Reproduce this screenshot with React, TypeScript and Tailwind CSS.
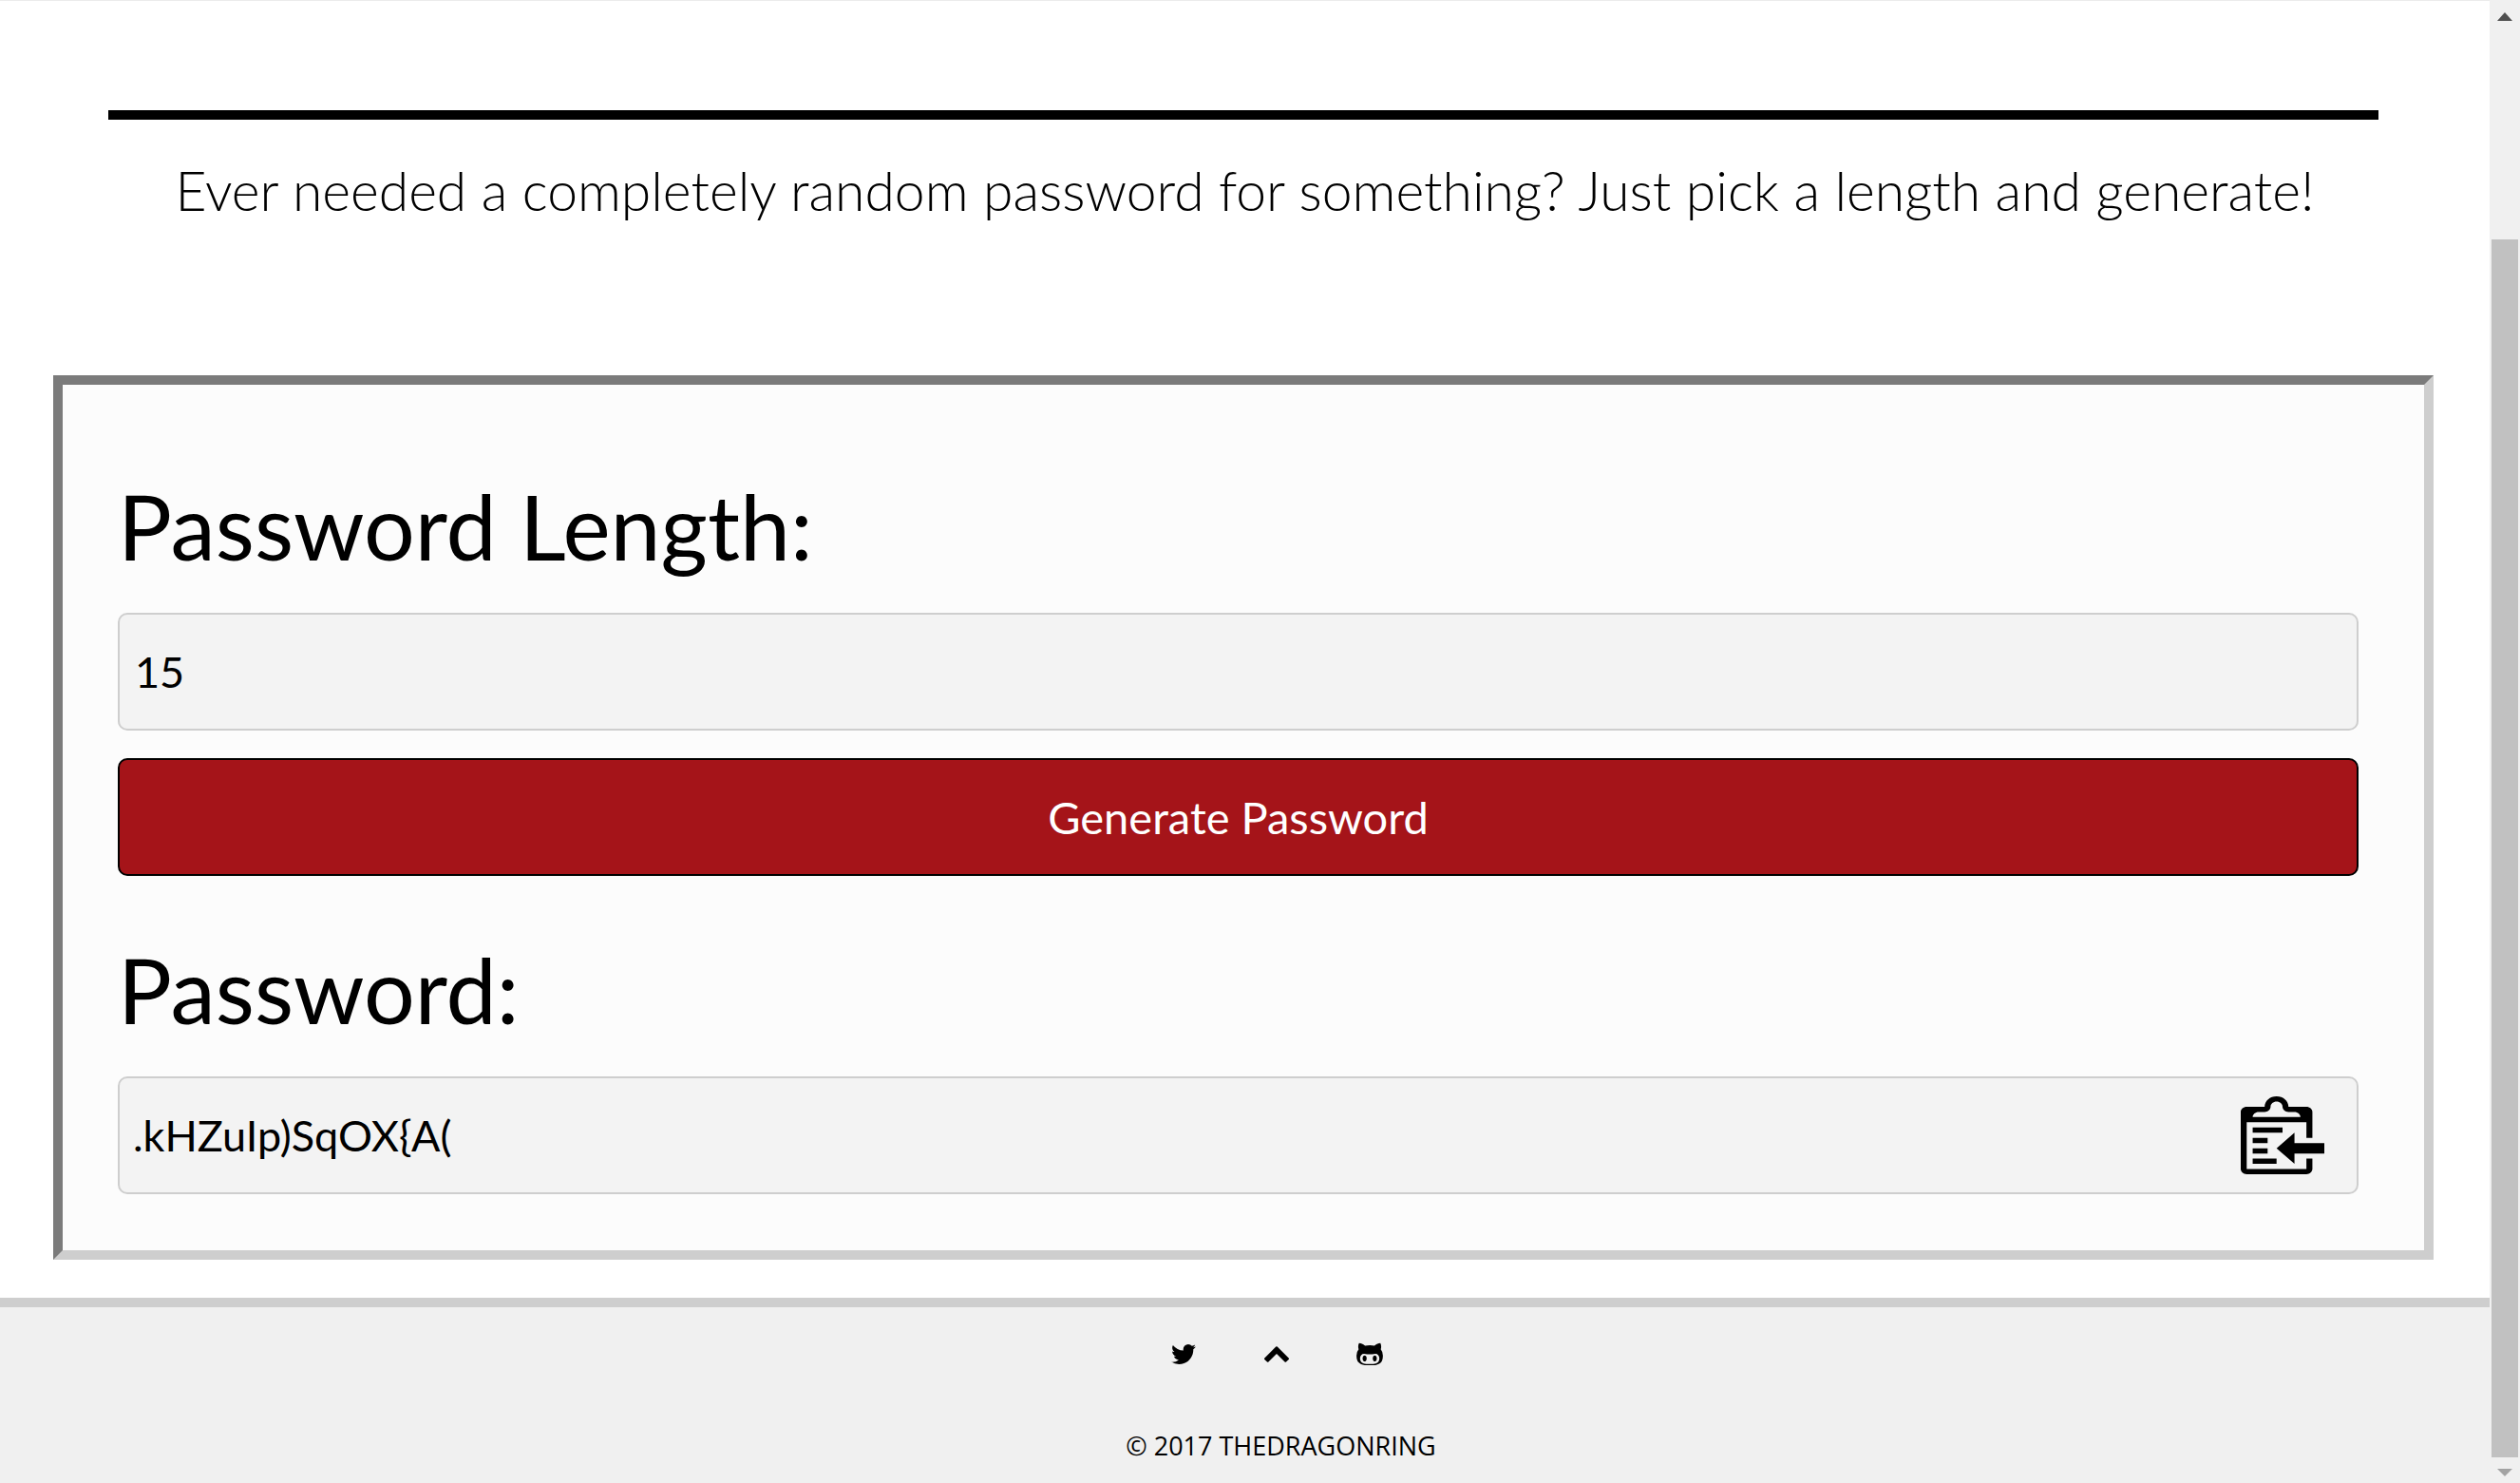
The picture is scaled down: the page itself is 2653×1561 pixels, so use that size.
import { useState } from 'react';

function ClipboardIcon() {
  return (
    <svg viewBox="0 1 14 15" preserveAspectRatio="none" className="block h-[82px] w-[88px]" fill="currentColor" aria-hidden="true">
      <path
        fillRule="evenodd"
        d="M2 13h4v1H2v-1zm5-6H2v1h5V7zm2 3V8l-3 3 3 3v-2h5v-2H9zM4.500 9H2v1h2.500V9zM2 12h2.500v-1H2v1zm9 1h1v2c-.02.28-.11.52-.3.7-.19.18-.42.28-.7.3H1c-.55 0-1-.45-1-1V4c0-.55.45-1 1-1h3c0-1.110.89-2 2-2 1.110 0 2 .89 2 2h3c.55 0 1 .45 1 1v5h-1V6H1v9h10v-2zM2 5h8c0-.55-.45-1-1-1H8c-.55 0-1-.45-1-1s-.45-1-1-1-1 .45-1 1-.45 1-1 1H3c-.55 0-1 .45-1 1z"
      />
    </svg>
  );
}

function TwitterIcon() {
  return (
    <svg viewBox="108 256 1576 1280" className="h-[21px] w-[26px]" fill="currentColor" aria-hidden="true">
      <path d="M1684 408q-67 98-162 167 1 14 1 42 0 130-38 259.5t-115.5 248.5-184.5 210.5-258 146-323 54.5q-271 0-496-145 35 4 78 4 225 0 401-138-105-2-188-64.5t-114-159.5q33 5 61 5 43 0 85-11-112-23-185.5-111.5t-73.5-205.5v-4q68 38 146 41-66-44-105-115t-39-154q0-88 44-163 121 149 294.5 238.5t371.5 99.5q-8-38-8-74 0-134 94.5-228.5t228.5-94.5q140 0 236 102 109-21 205-78-37 115-142 178 93-10 186-50z" />
    </svg>
  );
}

function ChevronUpIcon() {
  return (
    <svg viewBox="90 480 1612 1035" className="h-[17px] w-[26px]" fill="currentColor" aria-hidden="true">
      <path d="M1683 1331l-166 165q-19 19-45 19t-45-19l-531-531-531 531q-19 19-45 19t-45-19l-166-165q-19-19-19-45.5t19-45.5l742-741q19-19 45-19t45 19l742 741q19 19 19 45.5t-19 45.5z" />
    </svg>
  );
}

function GithubIcon() {
  return (
    <svg viewBox="0 128 1664 1436" className="h-[24px] w-[28px]" fill="currentColor" aria-hidden="true">
      <path d="M640 1136q0 40-12.5 82t-43 76-72.5 34-72.5-34-43-76-12.5-82 12.5-82 43-76 72.5-34 72.5 34 43 76 12.5 82zm640 0q0 40-12.5 82t-43 76-72.5 34-72.5-34-43-76-12.5-82 12.5-82 43-76 72.5-34 72.5 34 43 76 12.5 82zm160 0q0-120-69-204t-187-84q-41 0-195 21-71 11-157 11t-157-11q-152-21-195-21-118 0-187 84t-69 204q0 88 32 153.5t81 103 122 60 140 29.5 149 7h168q82 0 149-7t140-29.5 122-60 81-103 32-153.5zm224-176q0 207-61 331-38 77-105.5 133t-141 86-170 47.5-171.5 22-167 4.5q-78 0-142-3t-147.5-12.5-152.5-30-137-51.5-121-81-86-115q-62-123-62-331 0-237 136-396-27-82-27-170 0-116 51-218 108 0 190 39.5t189 123.5q147-35 309-35 148 0 280 32 105-82 187-121t189-39q51 102 51 218 0 87-27 168 136 160 136 398z" />
    </svg>
  );
}

function ScrollBar() {
  return (
    <aside className="flex w-8 shrink-0 flex-col items-center bg-[#f0f0f0]" aria-hidden="true">
      <svg viewBox="0 0 16 9" className="mt-[13px] h-[9px] w-4" fill="#505050">
        <path d="M8 0l8 9H0z" />
      </svg>
      <div className="mt-[230px] mb-3 w-7 flex-1 bg-[#c1c1c1]" />
      <svg viewBox="0 0 16 8" className="mb-[7px] h-2 w-4" fill="#a3a3a3">
        <path d="M8 8L0 0h16z" />
      </svg>
    </aside>
  );
}

const CHARSET = 'ABCDEFGHIJKLMNOPQRSTUVWXYZabcdefghijklmnopqrstuvwxyz0123456789!?.,(){}[]#$%&*';

function randomPassword(length: number) {
  return Array.from({ length }, () => CHARSET[Math.floor(Math.random() * CHARSET.length)]).join('');
}

export default function App() {
  const [length, setLength] = useState('15');
  const [password, setPassword] = useState('.kHZuIp)SqOX{A(');

  return (
    <div className="flex min-h-screen bg-white font-['Lato','Noto_Sans',sans-serif] text-black">
      <div className="flex min-w-0 flex-1 flex-col border-t border-[#ececec]">
        <main className="flex-1">
          <hr className="mt-[115px] mr-[117px] ml-[114px] border-t-[10px] border-black" />
          <p className="mt-[34px] text-center text-[57px] leading-[80px] font-light">
            Ever needed a completely random password for something? Just pick a length and generate!
          </p>

          <form
            className="mt-[155px] mr-[59px] mb-10 ml-14 border-[10px] border-t-[#7b7b7b] border-r-[#cecece] border-b-[#cecece] border-l-[#7b7b7b] bg-[#fcfcfc] pt-[90px] pr-[69px] pb-[59px] pl-[58px]"
            onSubmit={(e) => {
              e.preventDefault();
              setPassword(randomPassword(Math.max(0, Math.min(100, Number(length) || 0))));
            }}
          >
            <label htmlFor="length" className="block text-[95px] leading-[116px]">
              Password Length:
            </label>
            <input
              id="length"
              type="text"
              inputMode="numeric"
              value={length}
              onChange={(e) => setLength(e.target.value)}
              className="mt-[34px] block h-[124px] w-full rounded-[10px] border-2 border-[#cecece] bg-[#f3f3f3] px-4 text-[45px] outline-none"
            />
            <button
              type="submit"
              className="mt-[29px] block h-[124px] w-full rounded-[10px] border-2 border-black bg-[#a51419] text-[47px] text-white"
            >
              Generate Password
            </button>

            <label htmlFor="password" className="mt-[61px] block text-[95px] leading-[116px]">
              Password:
            </label>
            <div className="mt-[34px] flex h-[124px] items-center rounded-[10px] border-2 border-[#cecece] bg-[#f3f3f3] pr-[34px] pl-[14px]">
              <input
                id="password"
                type="text"
                readOnly
                value={password}
                className="h-full min-w-0 flex-1 bg-transparent text-[45px] outline-none"
              />
              <button type="button" aria-label="Copy password" onClick={() => navigator.clipboard?.writeText(password)}>
                <ClipboardIcon />
              </button>
            </div>
          </form>
        </main>

        <footer className="border-t-[10px] border-[#cecece] bg-[#f0f0f0] pt-[31px] pb-[21px]">
          <nav className="flex items-center justify-center gap-[66px] pl-[66px]">
            <a href="#twitter" aria-label="Twitter" className="flex h-9 w-8 items-center justify-center">
              <TwitterIcon />
            </a>
            <a href="#top" aria-label="Back to top" className="flex h-9 w-8 items-center justify-center">
              <ChevronUpIcon />
            </a>
            <a href="#github" aria-label="GitHub" className="flex h-9 w-8 items-center justify-center">
              <GithubIcon />
            </a>
          </nav>
          <p className="mt-[61px] pl-[76px] text-center font-['Open_Sans',sans-serif] text-[27px] leading-9">
            © 2017 THEDRAGONRING
          </p>
        </footer>
      </div>
      <ScrollBar />
    </div>
  );
}
